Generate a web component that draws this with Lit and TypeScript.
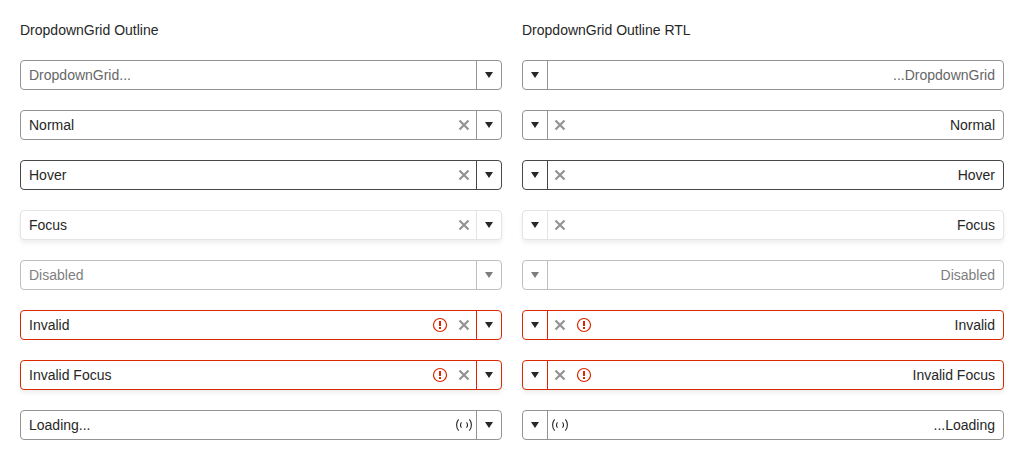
import { LitElement, html, css, svg, nothing } from "lit";
import { customElement, property } from "lit/decorators.js";
import { classMap } from "lit/directives/class-map.js";

type Variant = "" | "hover" | "focus" | "disabled" | "invalid" | "invalid-focus";

interface Row {
  name: string;
  value?: string;
  placeholder?: string;
  variant?: Variant;
  clearable?: boolean;
  loading?: boolean;
}

const rows: Row[] = [
  { name: "Empty", placeholder: "DropdownGrid..." },
  { name: "Normal", value: "Normal", clearable: true },
  { name: "Hover", value: "Hover", variant: "hover", clearable: true },
  { name: "Focus", value: "Focus", variant: "focus", clearable: true },
  { name: "Disabled", value: "Disabled", variant: "disabled" },
  { name: "Invalid", value: "Invalid", variant: "invalid", clearable: true },
  { name: "Invalid focus", value: "Invalid Focus", variant: "invalid-focus", clearable: true },
  { name: "Loading", value: "Loading...", loading: true },
];

const icons = {
  caret: svg`<path d="M8 11 4 5h8z" fill="currentColor" />`,
  clear: svg`<path d="M3.5 3.5l9 9M12.5 3.5l-9 9" fill="none" stroke="currentColor" stroke-width="2.2" />`,
  warning: svg`<circle cx="8" cy="8" r="6.5" fill="none" stroke="currentColor" stroke-width="1.2" />
    <path d="M7 4h2v5H7zM7 10h2v2H7z" fill="currentColor" />`,
  loading: svg`<path d="M2.6 2.3Q.6 4.7.6 8t2 5.7M13.4 2.3q2 2.4 2 5.7t-2 5.7M5.5 5.3Q4.5 6.4 4.5 8t1 2.7M10.5 5.3q1 1.1 1 2.7t-1 2.7"
    fill="none" stroke="currentColor" stroke-width="1.1" />`,
};

@customElement("dropdown-grid")
export class DropdownGrid extends LitElement {
  @property({ attribute: false }) row!: Row;

  static styles = css`
    :host {
      display: block;
    }
    .picker {
      display: flex;
      box-sizing: border-box;
      border: 1px solid #939393;
      border-radius: 4px;
      background: #fff;
      color: #272727;
      overflow: hidden;
    }
    .hover {
      border-color: #474747;
    }
    .focus {
      border-color: #e4e4e4;
    }
    .focus,
    .invalid-focus {
      box-shadow: 0 2px 4px rgba(0, 0, 0, 0.03), 0 4px 5px rgba(0, 0, 0, 0.04);
    }
    .invalid,
    .invalid-focus {
      border-color: #d92800;
    }
    .disabled {
      opacity: 0.6;
    }
    .input {
      flex: 1;
      min-width: 0;
      margin: 0;
      padding: 4px 8px;
      border: 0;
      outline: 0;
      background: none;
      color: inherit;
      font: inherit;
      line-height: 20px;
      height: 28px;
      box-sizing: border-box;
    }
    .input::placeholder {
      color: #666;
      opacity: 1;
    }
    .slot {
      display: flex;
      flex: none;
      align-items: center;
      justify-content: center;
      width: 24px;
      padding: 0;
      margin: 0;
      border: 0;
      background: none;
      color: inherit;
    }
    .clear {
      color: #939393;
    }
    .warning {
      color: #d92800;
    }
    .toggle {
      width: 25px;
      border-inline-start: 1px solid;
      border-color: inherit;
    }
    .icon {
      display: block;
      width: 16px;
      height: 16px;
    }
  `;

  private icon(name: keyof typeof icons) {
    return html`<svg class="icon" viewBox="0 0 16 16" aria-hidden="true">${icons[name]}</svg>`;
  }

  render() {
    const { name, value = "", placeholder = "", variant = "", clearable, loading } = this.row;
    const disabled = variant === "disabled";
    const invalid = variant.startsWith("invalid");
    return html`
      <div class=${classMap({ picker: true, ...(variant ? { [variant]: true } : {}) })}>
        <input
          class="input"
          type="text"
          role="combobox"
          aria-expanded="false"
          aria-label=${name}
          aria-invalid=${invalid ? "true" : "false"}
          .value=${value}
          placeholder=${placeholder}
          ?disabled=${disabled}
        />
        ${invalid ? html`<span class="slot warning">${this.icon("warning")}</span>` : nothing}
        ${loading ? html`<span class="slot">${this.icon("loading")}</span>` : nothing}
        ${clearable
          ? html`<button class="slot clear" type="button" aria-label="Clear">${this.icon("clear")}</button>`
          : nothing}
        <button class="slot toggle" type="button" aria-label="Open" ?disabled=${disabled}>
          ${this.icon("caret")}
        </button>
      </div>
    `;
  }
}

@customElement("app-root")
export class AppRoot extends LitElement {
  static styles = css`
    :host {
      display: grid;
      grid-template-columns: repeat(2, minmax(0, 1fr));
      gap: 20px;
      padding: 20px;
      background: #fff;
      color: #272727;
      font: 14px/20px "Liberation Sans", Arial, sans-serif;
    }
    .column {
      display: grid;
      gap: 20px;
    }
    .title {
      font-size: 14px;
      line-height: 20px;
      font-weight: 400;
      margin: 0;
    }
  `;

  private column(title: string, dir: "ltr" | "rtl") {
    return html`
      <section class="column">
        <h2 class="title">${title}</h2>
        ${rows.map((row) => html`<dropdown-grid dir=${dir} .row=${row}></dropdown-grid>`)}
      </section>
    `;
  }

  render() {
    return html`${this.column("DropdownGrid Outline", "ltr")}${this.column("DropdownGrid Outline RTL", "rtl")}`;
  }
}
